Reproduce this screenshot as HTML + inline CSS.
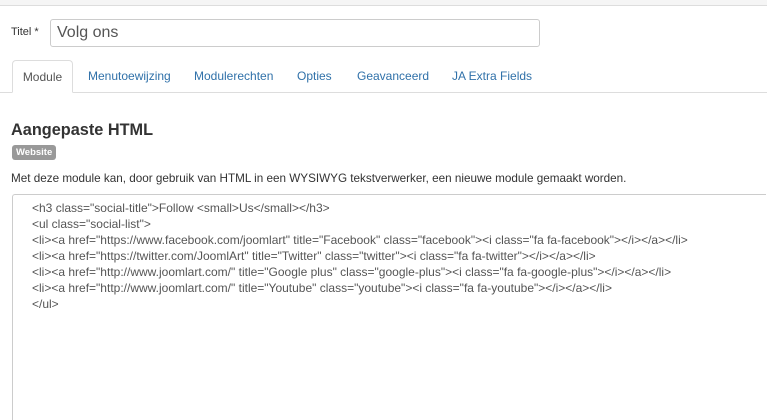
<!DOCTYPE html>
<html><head><meta charset="utf-8"><style>
html,body{margin:0;width:767px;height:420px;overflow:hidden}
body{background:#fff;font-family:"Liberation Sans",sans-serif;color:#333;position:relative}
.top{position:absolute;left:0;top:0;width:767px;height:5px;background:#f5f5f5;border-bottom:1px solid #ddd}
.a{position:absolute;white-space:nowrap}
.lbl{left:11px;top:26px;font-size:11px;color:#333}
.inp{left:50px;top:19px;width:482px;height:26px;border:1px solid #ccc;border-radius:3px;font-size:16px;line-height:26px;padding-left:6px;box-sizing:content-box;color:#555}
.tabline{left:0;top:92px;width:767px;height:1px;background:#ddd}
.tab{top:60px;height:33px;line-height:33px;font-size:12px;color:#3071a9}
.act{left:12px;width:61px;top:60px;height:33px;border:1px solid #ddd;border-bottom:1px solid #fff;border-radius:4px 4px 0 0;background:#fff;box-sizing:border-box;text-align:center;color:#555}
h2{position:absolute;left:11px;top:121px;margin:0;font-size:16.3px;font-weight:bold;color:#333}
.badge{left:12px;top:145px;height:15px;line-height:15px;padding:0 4px;background:#999;color:#fff;font-size:9.5px;font-weight:bold;border-radius:3px}
.p{left:11px;top:172px;font-size:11.7px;color:#333}
.ta{left:12px;top:194px;width:754px;height:226px;border:1px solid #ccc;border-right:none;border-bottom:none;border-radius:3px 0 0 0;box-sizing:border-box}
.code{left:32px;top:200px;font-size:12px;line-height:16px;color:#555}
</style></head><body>
<div class="top"></div>
<div class="a lbl">Titel *</div>
<div class="a inp">Volg ons</div>
<div class="a tabline"></div>
<div class="a tab act">Module</div>
<div class="a tab" style="left:88px">Menutoewijzing</div>
<div class="a tab" style="left:194px">Modulerechten</div>
<div class="a tab" style="left:297px">Opties</div>
<div class="a tab" style="left:357px">Geavanceerd</div>
<div class="a tab" style="left:452px">JA Extra Fields</div>
<h2>Aangepaste HTML</h2>
<div class="a badge">Website</div>
<div class="a p">Met deze module kan, door gebruik van HTML in een WYSIWYG tekstverwerker, een nieuwe module gemaakt worden.</div>
<div class="a ta"></div>
<div class="a code">&lt;h3 class="social-title"&gt;Follow &lt;small&gt;Us&lt;/small&gt;&lt;/h3&gt;<br>&lt;ul class="social-list"&gt;<br>&lt;li&gt;&lt;a href="https://www.facebook.com/joomlart" title="Facebook" class="facebook"&gt;&lt;i class="fa fa-facebook"&gt;&lt;/i&gt;&lt;/a&gt;&lt;/li&gt;<br>&lt;li&gt;&lt;a href="https://twitter.com/JoomlArt" title="Twitter" class="twitter"&gt;&lt;i class="fa fa-twitter"&gt;&lt;/i&gt;&lt;/a&gt;&lt;/li&gt;<br>&lt;li&gt;&lt;a href="http://www.joomlart.com/" title="Google plus" class="google-plus"&gt;&lt;i class="fa fa-google-plus"&gt;&lt;/i&gt;&lt;/a&gt;&lt;/li&gt;<br>&lt;li&gt;&lt;a href="http://www.joomlart.com/" title="Youtube" class="youtube"&gt;&lt;i class="fa fa-youtube"&gt;&lt;/i&gt;&lt;/a&gt;&lt;/li&gt;<br>&lt;/ul&gt;</div>
</body></html>
